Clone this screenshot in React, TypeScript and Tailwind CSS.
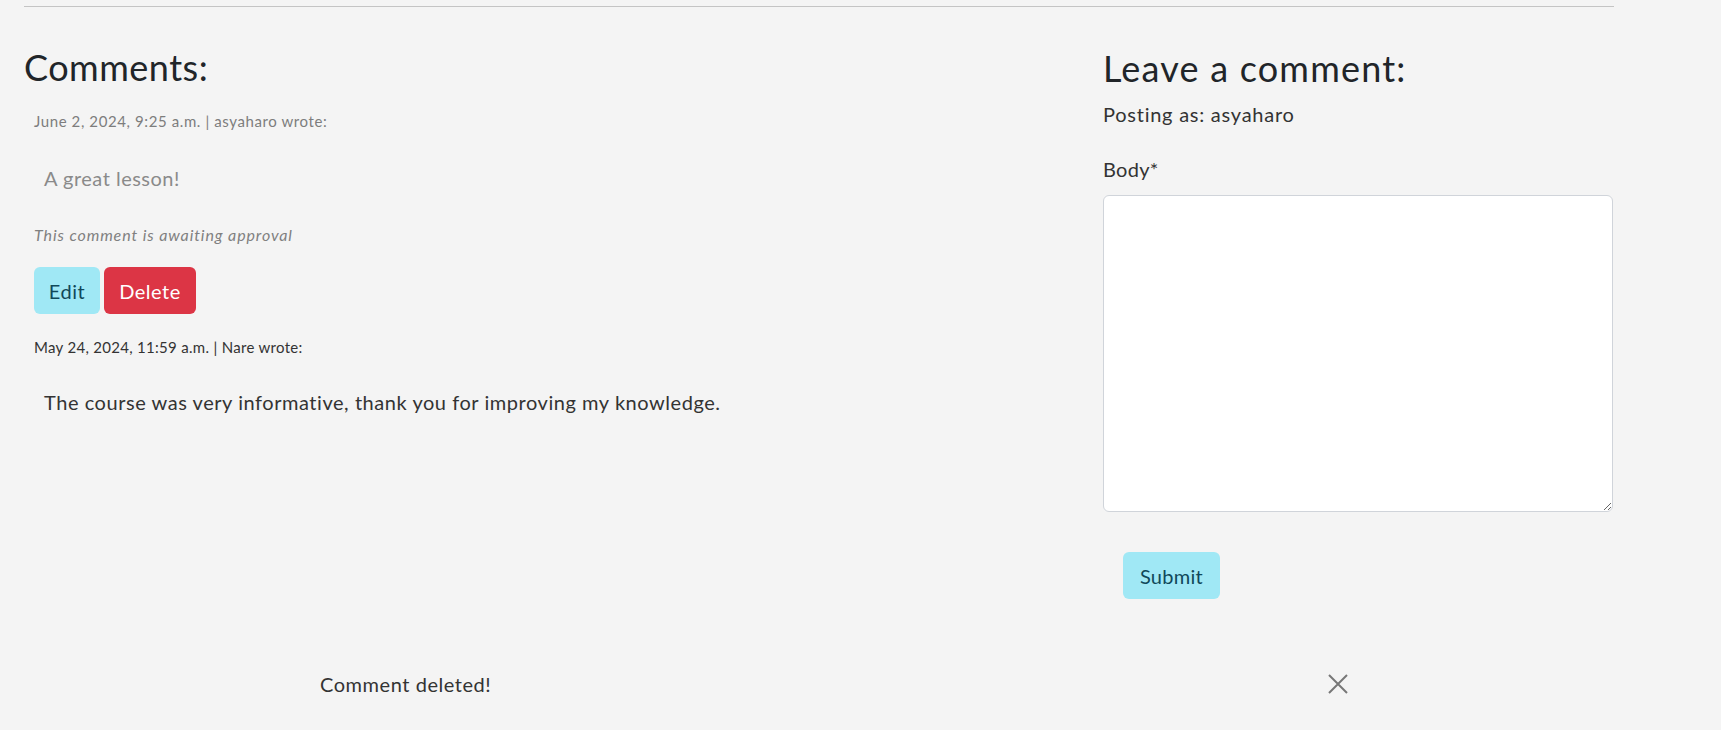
import React from "react";

const Divider = () => <div className="h-px w-[1590px] bg-[#c4c4c4] mt-[6px]" />;

const CloseIcon = () => (
  <svg width="20" height="20" viewBox="0 0 20 20" className="text-[#777]">
    <path d="M1 1L19 19M19 1L1 19" stroke="currentColor" strokeWidth="2" />
  </svg>
);

export default function App() {
  return (
    <div className="min-h-screen bg-[#f4f4f4] font-['Lato',sans-serif] text-[#333] px-[24px] overflow-hidden">
      <Divider />

      <div className="flex">
        {/* comments list */}
        <div className="w-[1079px] shrink-0">
          <h2 className="mt-[42px] text-[36px] leading-[36px] tracking-[0.5px] text-[#212529]">Comments:</h2>

          <p className="mt-[29px] ml-[10px] text-[15px] leading-[15px] tracking-[0.6px] text-[#7d7d7d]">
            June 2, 2024, 9:25 a.m. | asyaharo wrote:
          </p>
          <p className="mt-[39px] ml-[20px] text-[20px] leading-[20px] tracking-[0.5px] text-[#8a8a8a]">
            A great lesson!
          </p>
          <p className="mt-[39px] ml-[10px] text-[16px] leading-[16px] tracking-[0.9px] italic text-[#808080]">
            This comment is awaiting approval
          </p>
          <div className="mt-[24px] ml-[10px] flex gap-[4px]">
            <button className="h-[47px] w-[66px] rounded-md bg-[#a0e8f5] text-[20px] tracking-[0.5px] text-[#10485a]">
              Edit
            </button>
            <button className="h-[47px] w-[92px] rounded-md bg-[#dc3545] text-[20px] tracking-[0.5px] text-white">
              Delete
            </button>
          </div>

          <p className="mt-[26px] ml-[10px] text-[15px] leading-[15px] tracking-[0.3px] text-[#333]">
            May 24, 2024, 11:59 a.m. | Nare wrote:
          </p>
          <p className="mt-[37px] ml-[20px] text-[20px] leading-[20px] tracking-[0.55px] text-[#333]">
            The course was very informative, thank you for improving my knowledge.
          </p>
        </div>

        {/* comment form */}
        <div className="w-[511px] shrink-0">
          <h2 className="mt-[43px] text-[36px] leading-[36px] tracking-[1.2px] text-[#212529]">Leave a comment:</h2>
          <p className="mt-[18px] text-[20px] leading-[20px] tracking-[0.75px]">Posting as: asyaharo</p>
          <label className="block mt-[35px] text-[20px] leading-[20px] tracking-[0.3px]">Body*</label>
          <textarea className="block mt-[16px] w-[510px] h-[317px] bg-white border border-[#d0d4da] rounded-md resize-y" />
          <button className="mt-[40px] ml-[20px] h-[47px] w-[97px] rounded-md bg-[#a0e8f5] text-[20px] tracking-[0.3px] text-[#10485a]">
            Submit
          </button>
        </div>
      </div>

      {/* flash message */}
      <div className="mt-[75px] flex items-center">
        <p className="ml-[296px] text-[20px] leading-[20px] tracking-[0.55px] text-[#333]">Comment deleted!</p>
        <div className="ml-auto mr-[349px]">
          <CloseIcon />
        </div>
      </div>
    </div>
  );
}
